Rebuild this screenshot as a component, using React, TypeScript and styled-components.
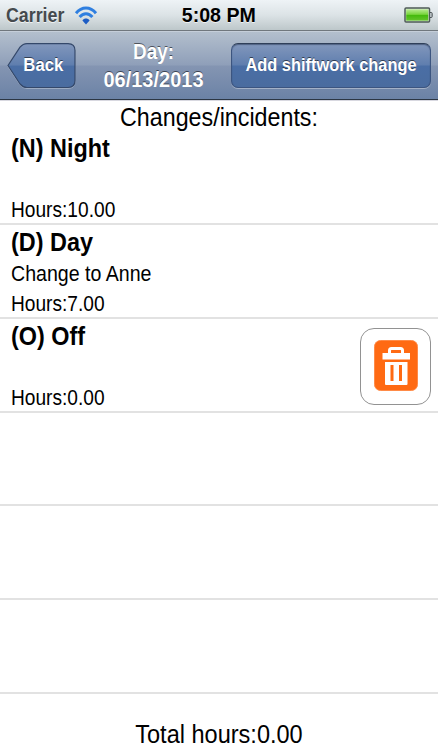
import React from "react";
import styled, { createGlobalStyle } from "styled-components";

const GlobalStyle = createGlobalStyle`
  * {
    box-sizing: border-box;
  }
  body {
    margin: 0;
    background: #fff;
    font-family: "Liberation Sans", Arial, sans-serif;
  }
  h1, h2, h3, p {
    margin: 0;
    font-weight: normal;
  }
`;

const Screen = styled.div`
  display: flex;
  flex-direction: column;
  width: 438px;
  height: 750px;
  overflow: hidden;
  background: #fff;
  color: #000;
`;

// condensed text, squeezed towards its own alignment edge
const Label = styled.span<{ $squeeze: number; $origin?: string }>`
  display: block;
  white-space: nowrap;
  transform: scaleX(${({ $squeeze }) => $squeeze});
  transform-origin: ${({ $origin }) => $origin || "center"};
`;

const StatusBar = styled.div`
  display: grid;
  grid-template-columns: 1fr 80px 1fr;
  align-items: center;
  flex: none;
  height: 31px;
  padding: 0 5px 0 6px;
  background: linear-gradient(#eef3f6, #dce3e6 50%, #bdc7ca);
  border-bottom: 1px solid #70777d;
  font-size: 20px;
  line-height: 30px;
  font-weight: bold;
  text-shadow: 0 1px 0 rgba(255, 255, 255, 0.7);
  .carrier {
    display: flex;
    align-items: center;
    color: #454a4e;
    svg {
      margin-left: 2px;
    }
  }
  .clock {
    display: flex;
    justify-content: center;
    padding-right: 2px;
  }
  .battery {
    justify-self: end;
  }
`;

const NavBar = styled.header`
  display: grid;
  grid-template-columns: 69px 1fr 200px;
  align-items: start;
  flex: none;
  height: 69px;
  padding: 11px 7px 0;
  background: linear-gradient(#b3bfcd, #8f9fb9 49%, #8495b2 51%, #6b82a6);
  border-top: 1px solid #c5ced9;
  border-bottom: 1px solid #2c3644;
  box-shadow: 0 1px 0 #d8d8e0;
  color: #fff;
  font-weight: bold;
  text-shadow: 0 -1px 0 rgba(0, 0, 0, 0.55);
  h1 {
    margin-top: -5px;
    font-size: 21.5px;
    font-weight: bold;
    line-height: 28px;
    text-align: center;
  }
`;

const BackButton = styled.button`
  display: grid;
  width: 69px;
  height: 46px;
  padding: 0;
  border: 0;
  background: none;
  color: inherit;
  font: bold 18px/45px "Liberation Sans", Arial, sans-serif;
  text-shadow: inherit;
  > * {
    grid-area: 1 / 1;
  }
  > span {
    padding-left: 4px;
  }
`;

const ActionButton = styled.button`
  display: flex;
  justify-content: center;
  width: 200px;
  height: 45px;
  padding: 0;
  border: 1px solid #3c5580;
  border-top-color: #2f3f59;
  border-radius: 7px;
  background: linear-gradient(#8297bc, #5f7eae 49%, #4a6ea5 51%, #4a6c9f);
  box-shadow: inset 0 1px 1px rgba(30, 45, 75, 0.5), 0 1px 0 rgba(255, 255, 255, 0.35);
  color: inherit;
  font: bold 18px/43px "Liberation Sans", Arial, sans-serif;
  text-shadow: inherit;
`;

const Heading = styled.h2`
  flex: none;
  height: 31.25px;
  font-size: 26px;
  line-height: 34px;
  text-align: center;
`;

const Row = styled.li`
  display: flex;
  justify-content: space-between;
  height: 93.75px;
  padding: 0 7px 0 11px;
  border-bottom: 2px solid #e2e2e2;
  h3 {
    font-size: 26px;
    font-weight: bold;
    line-height: 34px;
  }
  p {
    height: 30px;
    font-size: 22px;
    line-height: 30px;
  }
`;

const List = styled.ul`
  flex: none;
  margin: 0;
  padding: 0;
  list-style: none;
`;

const DeleteButton = styled.button`
  display: flex;
  justify-content: center;
  width: 71px;
  height: 77px;
  margin-top: 9px;
  padding: 11px 0 0;
  border: 1.5px solid #929292;
  border-radius: 14px;
  background: #fff;
`;

const Footer = styled.footer`
  flex: 1;
  padding-top: 23px;
  font-size: 26px;
  line-height: 34px;
  text-align: center;
`;

const WifiIcon = () => (
  <svg width="24" height="21" viewBox="0 0 24 21" fill="none">
    <g stroke="#2f7fe0" strokeWidth="3">
      <path d="M2 8.2C7.8 1.4 16.2 1.4 22 8.2" />
      <path d="M5.6 12C9.4 7.6 14.6 7.6 18.4 12" />
    </g>
    <path d="M8.400 15.400C10.400 13 13.600 13 15.600 15.400L12 19.500Z" fill="#1c5cc4" />
  </svg>
);

const BatteryIcon = () => (
  <svg className="battery" width="29" height="17" viewBox="0 0 29 17">
    <defs>
      <linearGradient id="charge" x1="0" y1="0" x2="0" y2="1">
        <stop offset="0" stopColor="#b8ec91" />
        <stop offset="0.45" stopColor="#77d43c" />
        <stop offset="0.5" stopColor="#42b90b" />
        <stop offset="1" stopColor="#64c42c" />
      </linearGradient>
    </defs>
    <rect x="1" y="1" width="24.5" height="14" rx="1" fill="#d7e6d0" stroke="#4e5b57" strokeWidth="1.5" />
    <rect x="2.2" y="2.4" width="22" height="11.2" fill="url(#charge)" />
    <path d="M26 5.5h1.3q.9 0 .9.9v3.2q0 .9-.9.9H26" fill="#b6bec1" stroke="#4e5558" />
  </svg>
);

const BackShape = () => (
  <svg width="69" height="46" viewBox="0 0 69 46">
    <defs>
      <linearGradient id="back" x1="0" y1="0" x2="0" y2="1">
        <stop offset="0" stopColor="#8297bc" />
        <stop offset="0.49" stopColor="#5f7eae" />
        <stop offset="0.51" stopColor="#4a6ea5" />
        <stop offset="1" stopColor="#4a6c9f" />
      </linearGradient>
    </defs>
    <path
      d="M1 23.5L13 5Q16 1.5 20 1.5H61Q68 1.5 68 8.500V38.500Q68 45.500 61 45.500H20Q16 45.500 13 42Z"
      fill="none"
      stroke="#fff"
      strokeOpacity="0.3"
    />
    <path
      d="M1 22.5L13 4.200Q16 .6 20 .6H61Q68 .6 68 7.500V37.500Q68 44.500 61 44.500H20Q16 44.500 13 41Z"
      fill="url(#back)"
      stroke="#34486a"
      strokeWidth="1.2"
    />
  </svg>
);

const TrashIcon = () => (
  <svg width="44" height="51" viewBox="0 0 44 51">
    <rect x="0.500" y="0.500" width="43" height="50" rx="6" fill="#ff6a13" stroke="#ff8b48" />
    <path d="M15.500 14V10.500Q15.500 8.500 17.500 8.500H26.500Q28.500 8.500 28.500 10.500V14" fill="none" stroke="#fff" strokeWidth="3" />
    <path d="M8.500 13H36V19.500H8.500Z" fill="#fff" />
    <path d="M11 22H33.500V44Q33.500 45 32.500 45H12Q11 45 11 44Z" fill="#fff" />
    <path d="M16.500 25H19.500V41H16.500ZM25 25H28V41H25Z" fill="#ff6a13" />
  </svg>
);

const changes = [
  { id: 1, title: "(N) Night", describe: "", hours: "10.00" },
  { id: 2, title: "(D) Day", describe: "Change to Anne", hours: "7.00" },
  { id: 3, title: "(O) Off", describe: "", hours: "0.00", removable: true },
  { id: 4 },
  { id: 5 },
  { id: 6 },
];

const App = () => {
  return (
    <>
      <GlobalStyle />
      <Screen>
        <StatusBar>
          <div className="carrier">
            <Label $squeeze={0.89} $origin="left">
              Carrier
            </Label>
            <WifiIcon />
          </div>
          <div className="clock">
            <Label $squeeze={0.98}>5:08 PM</Label>
          </div>
          <BatteryIcon />
        </StatusBar>
        <NavBar>
          <BackButton>
            <BackShape />
            <Label $squeeze={0.93}>Back</Label>
          </BackButton>
          <h1>
            <Label $squeeze={0.88}>Day:</Label>
            <Label $squeeze={0.93}>06/13/2013</Label>
          </h1>
          <ActionButton>
            <Label $squeeze={0.91}>Add shiftwork change</Label>
          </ActionButton>
        </NavBar>
        <Heading>
          <Label $squeeze={0.895}>Changes/incidents:</Label>
        </Heading>
        <List>
          {changes.map((change) => (
            <Row key={change.id}>
              {change.title && (
                <div>
                  <h3>
                    <Label $squeeze={0.9} $origin="left">
                      {change.title}
                    </Label>
                  </h3>
                  <p>
                    <Label $squeeze={0.89} $origin="left">
                      {change.describe}
                    </Label>
                  </p>
                  <p>
                    <Label $squeeze={0.87} $origin="left">
                      Hours:{change.hours}
                    </Label>
                  </p>
                </div>
              )}
              {change.removable && (
                <DeleteButton aria-label="Delete">
                  <TrashIcon />
                </DeleteButton>
              )}
            </Row>
          ))}
        </List>
        <Footer>
          <Label $squeeze={0.905}>Total hours:0.00</Label>
        </Footer>
      </Screen>
    </>
  );
};

export default App;
